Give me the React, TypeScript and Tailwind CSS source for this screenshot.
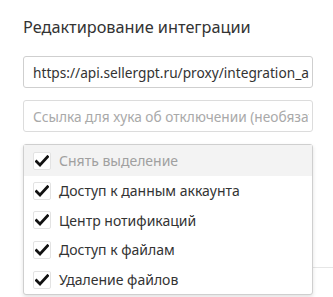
import React from 'react';

const items = [
  { label: 'Снять выделение', muted: true },
  { label: 'Доступ к данным аккаунта' },
  { label: 'Центр нотификаций' },
  { label: 'Доступ к файлам' },
  { label: 'Удаление файлов' },
];

const Check: React.FC = () => (
  <span className="flex h-[18px] w-[18px] items-center justify-center rounded-[2px] border border-[#e3e3e3] bg-white">
    <svg width="14" height="12" viewBox="0 0 14 12">
      <path d="M1.5 6.5 L5 10 L12.5 1.8" fill="none" stroke="#111" strokeWidth="2.8" strokeLinecap="square" />
    </svg>
  </span>
);

export default function App() {
  return (
    <div
      className="relative h-[297px] w-[333px] overflow-hidden bg-white pl-[23px] pr-[20px] pt-[16px]"
      style={{ fontFamily: '"Noto Sans", "Open Sans", sans-serif' }}
    >
      <h2 className="text-[16.3px] leading-[22px] text-[#333]">Редактирование интеграции</h2>

      <div className="mt-[18px] flex h-[32px] items-center rounded-[3px] border border-[#cfcfcf] pl-[9px] pr-[3px]">
        <div className="overflow-hidden">
          <span className="whitespace-nowrap text-[13.7px] text-[#333]">https://api.sellergpt.ru/proxy/integration_a</span>
        </div>
      </div>

      <div className="mt-[12px] flex h-[32px] items-center rounded-[3px] border border-[#dcdcdc] pl-[9px] pr-[3px]">
        <div className="overflow-hidden">
          <span className="whitespace-nowrap text-[13.7px] text-[#a9a9a9]">Ссылка для хука об отключении (необязательно)</span>
        </div>
      </div>

      <div className="relative z-10 mt-[12px] flex flex-col rounded-[3px] border border-[#cfcfcf] bg-white shadow-[0_2px_4px_rgba(0,0,0,0.12)]">
        {items.map((it) => (
          <div
            key={it.label}
            className={`flex items-center gap-[8px] px-[9px] ${it.muted ? 'h-[31px] bg-[#f3f3f3]' : 'h-[29.6px]'}`}
          >
            <Check />
            <span className={`text-[14px] ${it.muted ? 'text-[#a0a0a0]' : 'text-[#333]'}`}>{it.label}</span>
          </div>
        ))}
      </div>

      <div className="absolute left-[313px] top-[267px] h-px w-[20px] bg-[#e6e6e6]" />
    </div>
  );
}
